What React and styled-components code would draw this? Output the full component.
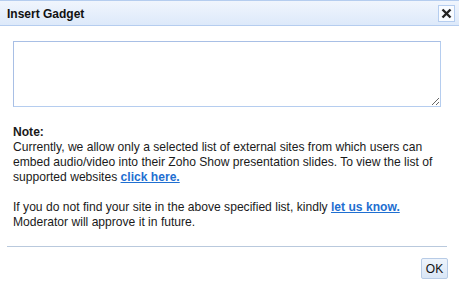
import React from 'react';
import styled, { createGlobalStyle } from 'styled-components';

const GlobalStyle = createGlobalStyle`
  html, body {
    margin: 0;
    padding: 0;
    background: #ffffff;
  }
  body {
    font-family: "Liberation Sans", Arial, sans-serif;
    color: #1a1a1a;
  }
`;

const Dialog = styled.div`
  width: 459px;
  height: 286px;
  background: #ffffff;
  display: flex;
  flex-direction: column;
`;

const Header = styled.div`
  height: 24px;
  border-top: 1px solid #b5cdef;
  border-bottom: 1px solid #b5cdef;
  background: linear-gradient(#f0f5fd, #dde9fa);
  display: flex;
  align-items: center;
  justify-content: space-between;
  padding: 0 4px 0 7px;
`;

const Title = styled.div`
  font-size: 12px;
  font-weight: bold;
  color: #111;
  margin-top: 1px;
`;

const CloseButton = styled.button`
  width: 17px;
  height: 17px;
  padding: 0;
  border: 1px solid #b5cdef;
  background: #f8fbff;
  display: flex;
  align-items: center;
  justify-content: center;
  cursor: pointer;
`;

const Body = styled.div`
  padding: 15px 18px 0 13px;
`;

const Input = styled.textarea`
  display: block;
  box-sizing: border-box;
  width: 428px;
  height: 66px;
  border: 1px solid #a8bfe5;
  border-bottom-color: #b5cdef;
  border-right-color: #b5cdef;
  resize: both;
  margin: 0;
`;

const Notes = styled.div`
  margin-top: 18px;
  font-size: 12.1px;
  line-height: 15px;
  color: #1a1a1a;
  white-space: nowrap;
`;

const Para = styled.p`
  margin: 0 0 ${p => p.gap || 0}px 0;
`;

const Link = styled.a`
  color: #1f6fd1;
  font-weight: bold;
  text-decoration: underline;
`;

const Divider = styled.div`
  margin: 16px 12px 0 7px;
  height: 1px;
  background: #b9c9dd;
`;

const Footer = styled.div`
  display: flex;
  justify-content: flex-end;
  padding: 11px 11px 0 0;
`;

const OkButton = styled.button`
  box-sizing: border-box;
  width: 27px;
  height: 21px;
  padding: 0;
  border: 1px solid #b7cbe6;
  border-radius: 2px;
  background: linear-gradient(#eef4fc, #d9e6f6);
  font-family: "Liberation Sans", Arial, sans-serif;
  font-size: 12px;
  color: #111;
`;

export default function App() {
  return (
    <>
      <GlobalStyle />
      <Dialog>
        <Header>
          <Title>Insert Gadget</Title>
          <CloseButton>
            <svg width="11" height="11" viewBox="0 0 11 11">
              <path d="M1.5 1.5 L9.5 9.5 M9.5 1.5 L1.5 9.5" stroke="#222" strokeWidth="2.4" />
            </svg>
          </CloseButton>
        </Header>
        <Body>
          <Input />
          <Notes>
            <Para><b>Note:</b></Para>
            <Para gap={15}>
              Currently, we allow only a selected list of external sites from which users can
              <br />
              embed audio/video into their Zoho Show presentation slides. To view the list of
              <br />
              supported websites <Link href="#">click here.</Link>
            </Para>
            <Para>
              If you do not find your site in the above specified list, kindly <Link href="#">let us know.</Link>
              <br />
              Moderator will approve it in future.
            </Para>
          </Notes>
        </Body>
        <Divider />
        <Footer>
          <OkButton>OK</OkButton>
        </Footer>
      </Dialog>
    </>
  );
}
